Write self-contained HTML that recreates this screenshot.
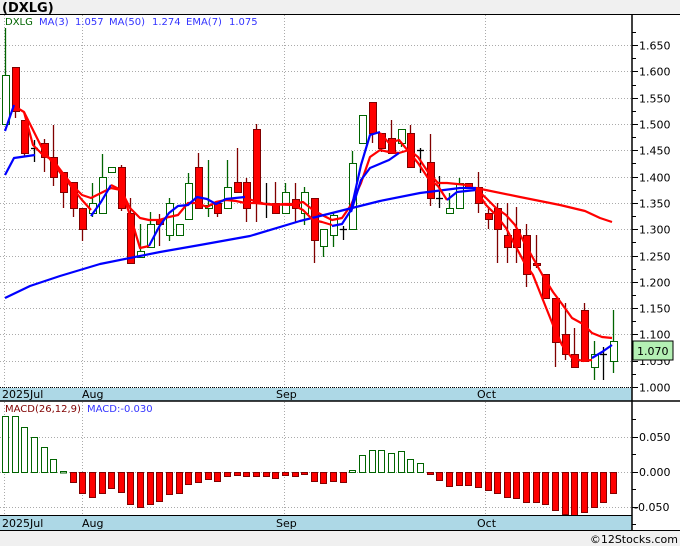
<!DOCTYPE html>
<html><head><meta charset="utf-8">
<style>
html,body{margin:0;padding:0;background:#f0f0f0;}
body{width:680px;height:546px;overflow:hidden;position:relative;font-family:"Liberation Sans","DejaVu Sans",sans-serif;}
svg{position:absolute;left:0;top:0;}
</style></head>
<body>
<svg id="s" width="680" height="546" xmlns="http://www.w3.org/2000/svg" font-family="'DejaVu Sans','Liberation Sans',sans-serif">
<rect x="0" y="14" width="680" height="517" fill="#fff"/>
<text x="2" y="12" font-size="13" font-weight="bold" fill="#000">(DXLG)</text>
<g id="grid" stroke="#aaa" stroke-dasharray="1,2" stroke-width="1"></g>
<g id="c"></g>
<g id="lines" fill="none" stroke-width="2.2" stroke-linejoin="round"></g>
<rect x="0" y="388" width="632" height="13" fill="#add8e6"/>
<rect x="0" y="516" width="632" height="14" fill="#add8e6"/>
<line x1="0" y1="387.5" x2="632" y2="387.5" stroke="#000" stroke-dasharray="1,1"/>
<line x1="0" y1="401" x2="680" y2="401" stroke="#000" stroke-width="1.5"/>
<line x1="0" y1="515.5" x2="632" y2="515.5" stroke="#000"/>
<line x1="0" y1="530.5" x2="680" y2="530.5" stroke="#000"/>
<line x1="0" y1="14.5" x2="680" y2="14.5" stroke="#000"/>
<line x1="632" y1="14" x2="632" y2="531" stroke="#000" stroke-width="1.5"/>
<g font-size="11" fill="#000">
<text x="2" y="398">2025Jul</text><text x="82" y="398">Aug</text><text x="276" y="398">Sep</text><text x="477" y="398">Oct</text>
<text x="2" y="527">2025Jul</text><text x="82" y="527">Aug</text><text x="276" y="527">Sep</text><text x="477" y="527">Oct</text>
</g>
<g font-size="10">
<text x="5" y="25" fill="#006400">DXLG</text>
<text x="39" y="25" fill="#3333ff">MA(3)</text><text x="75" y="25" fill="#3333ff">1.057</text>
<text x="109" y="25" fill="#3333ff">MA(50)</text><text x="152" y="25" fill="#3333ff">1.274</text>
<text x="186" y="25" fill="#3333ff">EMA(7)</text><text x="229" y="25" fill="#3333ff">1.075</text>
<text x="5" y="412" fill="#800000">MACD(26,12,9)</text>
<text x="87" y="412" fill="#3333ff">MACD:-0.030</text>
</g>
<g id="ax" font-size="11" fill="#000"></g>
<rect x="633" y="341" width="40" height="19" fill="#b4f0b4" stroke="#000"/>
<text x="637" y="355" font-size="11" fill="#000">1.070</text>
<text x="678" y="543" font-size="11" fill="#000" text-anchor="end">©12Stocks.com</text>
</svg>
<script>
var NS="http://www.w3.org/2000/svg";
function el(p,t,a){var e=document.createElementNS(NS,t);for(var k in a)e.setAttribute(k,a[k]);p.appendChild(e);return e;}
var g=document.getElementById('grid'),c=document.getElementById('c'),L=document.getElementById('lines'),ax=document.getElementById('ax');
function py(p){return 387-526*(p-1);}
// horizontal grid main
for(var i=0;i<=13;i++){var p=1+i*0.05,y=Math.round(py(p))+0.5;el(g,'line',{x1:0,y1:y,x2:632,y2:y});
 el(ax,'line',{x1:632,y1:y,x2:638,y2:y,stroke:'#000'});
 if(i!==1) {var t=el(ax,'text',{x:639,y:y+4});t.textContent=p.toFixed(3);}
 var y2=Math.round(py(p+0.025))+0.5; if(y2>16) el(ax,'line',{x1:632,y1:y2,x2:636,y2:y2,stroke:'#000'});}
var t1=el(ax,'text',{x:639,y:Math.round(py(1.05))+4});t1.textContent='1.050';
// macd grid
[[437,'0.050'],[472,'0.000'],[507,'-0.050']].forEach(function(a){el(g,'line',{x1:0,y1:a[0]+.5,x2:632,y2:a[0]+.5});
 el(ax,'line',{x1:632,y1:a[0]+.5,x2:638,y2:a[0]+.5,stroke:'#000'});var t=el(ax,'text',{x:a[1][0]=='-'?634:639,y:a[0]+4});t.textContent=a[1];});
[419,454,489,524].forEach(function(y){if(y<530)el(ax,'line',{x1:632,y1:y+.5,x2:636,y2:y+.5,stroke:'#000'});});
[4.5,82.5,284.5,485.5].forEach(function(x){el(g,'line',{x1:x,y1:15,x2:x,y2:531});});
// candles: [type, top, bottom, high, low]  g=green r=red d=doji
var C=[['g',75,124,28,124],['r',67,111,67,118],['r',120,153,120,157],['d',148,148,140,162],['r',143,157,139,172],['r',157,177,125,186],['r',172,192,172,208],['r',182,208,182,217],['r',208,229,208,241],['g',203,213,183,217],['g',177,213,154,213],['g',167,172,167,172],['r',167,208,165,211],['r',213,263,198,263],['g',251,257,224,257],['g',224,247,212,247],['r',219,224,214,246],['g',203,235,198,241],['g',224,235,224,235],['g',183,219,173,219],['r',167,208,153,208],['g',205,208,160,217],['r',203,213,203,217],['g',187,208,160,208],['r',182,192,148,192],['r',182,208,178,222],['r',129,203,124,222],['d',203,203,183,218],['r',203,213,182,213],['g',192,213,183,213],['r',199,208,183,222],['g',192,213,187,225],['r',198,240,198,263],
['g',229,246,229,257],['g',215,235,213,247],['d',229,229,226,240],['g',163,229,151,229],['g',115,143,115,143],['r',102,133,102,143],['r',133,148,133,152],['r',138,153,120,153],['g',129,143,129,147],['r',133,167,125,167],['d',150,150,148,173],['r',162,198,134,206],['d',198,198,176,208],['g',208,213,193,213],['g',183,208,178,208],['r',183,188,183,188],['r',187,203,172,213],['r',213,219,208,229],['r',208,229,203,263],['r',235,247,203,263],['r',229,247,207,263],['r',235,274,224,287],['r',263,265,235,268],['r',274,298,274,298],['r',298,342,298,367],['r',334,354,303,360],['r',354,367,328,367],['r',310,361,303,361],['g',354,367,341,380],['d',354,354,347,380],['g',341,361,310,373]];
function cx(i){return Math.round(5+9.65*i);}
C.forEach(function(d,i){var x=cx(i);var col=d[0]=='g'?'#006400':d[0]=='r'?'#800000':'#000';
 el(c,'line',{x1:x+.5,y1:d[3],x2:x+.5,y2:d[4],stroke:col,'stroke-width':1.3});
 if(d[0]=='d'){el(c,'line',{x1:x-3,y1:d[1]+.5,x2:x+4,y2:d[1]+.5,stroke:'#000','stroke-width':1.3});}
 else el(c,'rect',{x:x-3+.5,y:d[1]+.5,width:7,height:Math.max(d[2]-d[1],2),fill:d[0]=='g'?'#fff':'#f00',stroke:col,'stroke-width':1});});
// MACD
var M=[416,416,427,437,447,459,471,482,493,497,493,488,492,504,507,504,501,494,493,484,482,479,481,476,475,476,476,476,478,475,476,474,481,483,481,482,470,455,450,450,453,451,459,463,474,480,486,485,485,487,490,493,497,498,502,502,504,510,514,515,512,507,502,493];
M.forEach(function(v,i){var x=cx(i);var pos=v<472;var t=Math.min(v,472),h=Math.max(Math.abs(v-472),1.5);
 el(c,'rect',{x:x-3+.5,y:t+.5,width:6,height:h,fill:pos?'#fff':'#f00',stroke:pos?'#006400':'#800000','stroke-width':1});});
function pl(pts,col){el(L,'polyline',{points:pts,stroke:col});}
pl("14,106 24,112 33,145 43,155 53,160 62,172 72,185 82,195 91,198 101,193 111,188 121,190 130,208 140,218 149,220 159,220 169,217 178,215 188,203 197,203 207,207 216,202 226,200 236,201 245,203 255,203 265,204 274,205 284,204 293,204 303,202 313,210 322,215 332,220 342,218 351,205 361,183 370,157 380,150 389,152 399,153 409,150 418,157 428,172 438,183 447,183 457,184 467,185 477,190 486,198 496,208 506,215 515,225 524,242 533,258 543,276 553,292 562,304 572,318 583,324 592,333 602,337 612,338","#f00");
pl("5,298 30,286 60,276 100,264 130,258 160,252 200,245 250,236 300,221 340,211 380,201 420,193 460,188 476,188","#00f");
pl("476,188 520,197 560,205 585,211 600,218 612,222","#f00");
pl("5,175 14,158 35,155","#00f");
pl("5,131 14,105","#00f");
pl("24,112 43,150 62,175 82,200 91,210","#f00");
pl("91,216 101,202 111,185","#00f");
pl("111,185 121,190 130,215 140,248 149,246","#f00");
pl("149,246 159,227 169,213 178,206 188,205 197,197 207,199 216,204 226,199 245,197","#00f");
pl("245,198 265,204 293,205 303,210 313,220 322,222 332,225","#f00");
pl("332,226 342,224 351,210 361,165 370,135 380,132","#00f");
pl("351,212 361,180 370,168 389,160 399,153","#00f");
pl("380,133 389,143 399,140 409,152 418,163 428,178 438,186 447,200","#f00");
pl("447,200 457,192 476,190","#00f");
pl("476,190 486,205 496,215 506,228 515,245 524,262 533,275 543,300 553,325 562,345 572,358 583,361 592,360","#f00");
pl("592,358 602,352 612,345","#00f");
</script>
</body></html>
